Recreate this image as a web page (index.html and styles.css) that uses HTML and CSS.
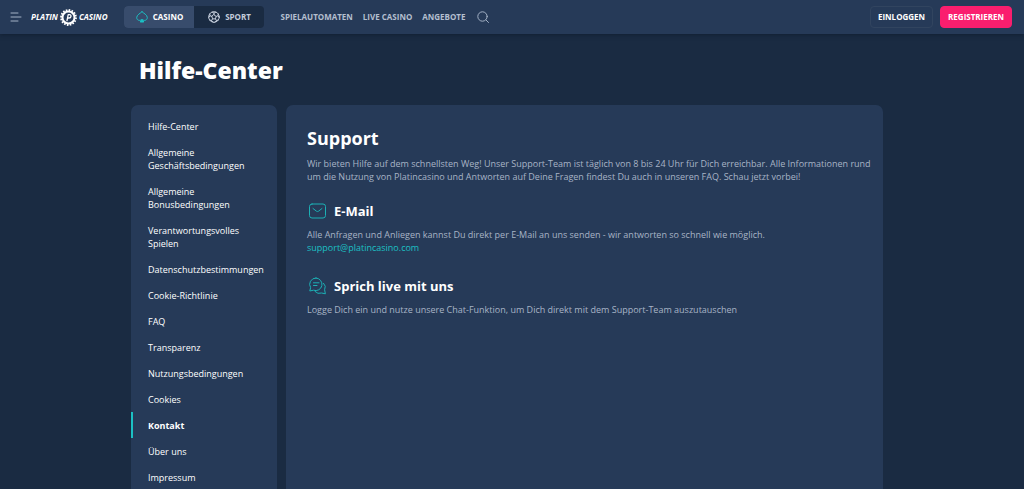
FILE: index.html
```html
<!DOCTYPE html>
<html lang="de">

<head>
    <meta charset="UTF-8">
    <meta name="viewport" content="width=device-width, initial-scale=1.0">
    <title>Hilfe-Center - Platin Casino</title>
    <link rel="stylesheet" href="styles.css">
</head>

<body>
    <header class="topbar">
        <button class="menu-btn" aria-label="Menu">
            <svg width="12" height="10" viewBox="0 0 12 10"><path d="M1 1h7M1 5h10M1 9h7" /></svg>
        </button>
        <a class="logo" href="#">
            <span>PLATIN</span>
            <svg class="chip" width="17" height="17" viewBox="0 0 17 17">
                <circle class="teeth" cx="8.5" cy="8.5" r="7.4" />
                <circle class="ring" cx="8.5" cy="8.5" r="6" />
                <path class="mark" d="M7 11.600L8.200 5.700h1.300c2.200 0 1.900 3.300-.5 3.300H7.600" />
            </svg>
            <span>CASINO</span>
        </a>
        <div class="switch">
            <a class="switch-item active" href="#">
                <svg width="12" height="12" viewBox="0 0 12 12">
                    <path d="M6 .7C4.500 2.300.7 3.800.7 6.600c0 2.700 2.900 3.500 4.700 2.100h1.200c1.800 1.400 4.700.6 4.700-2.100C11.300 3.800 7.500 2.300 6 .7z" />
                    <path class="stem" d="M5.400 9L4.200 11h3.600L6.600 9z" />
                </svg>
                CASINO
            </a>
            <a class="switch-item" href="#">
                <svg width="12" height="12" viewBox="0 0 12 12">
                    <circle cx="6" cy="6" r="5.300" />
                    <path d="M6 3.800l2.200 1.600-.8 2.500H4.600l-.8-2.500zM6 3.800V2.200M8.200 5.400l1.700-.6M7.400 7.900l1 1.500M4.600 7.900l-1 1.500M3.800 5.400l-1.700-.6M4.200 1.100L6 2.200l1.800-1.100M11.200 6.300L9.900 4.800l.4-1.900M6.800 11.200l1.600-1.800 1.900-.3M1.700 9.100l1.900.3 1.600 1.800M1.700 2.900l.4 1.900L.8 6.300" />
                </svg>
                SPORT
            </a>
        </div>
        <nav class="main-nav">
            <a href="#">SPIELAUTOMATEN</a>
            <a href="#">LIVE CASINO</a>
            <a href="#">ANGEBOTE</a>
        </nav>
        <button class="search-btn" aria-label="Suche">
            <svg width="12" height="12" viewBox="0 0 12 12"><circle cx="5.500" cy="5.500" r="4.700" /><path d="M9 9l2.500 2.500" /></svg>
        </button>
        <div class="account">
            <button class="btn">EINLOGGEN</button>
            <button class="btn btn-primary">REGISTRIEREN</button>
        </div>
    </header>

    <main class="page">
        <h1>Hilfe-Center</h1>
        <div class="columns">
            <ul class="sidebar">
                <li><a href="#">Hilfe-Center</a></li>
                <li><a href="#">Allgemeine Geschäftsbedingungen</a></li>
                <li><a href="#">Allgemeine Bonusbedingungen</a></li>
                <li><a href="#">Verantwortungsvolles Spielen</a></li>
                <li><a href="#">Datenschutzbestimmungen</a></li>
                <li><a href="#">Cookie-Richtlinie</a></li>
                <li><a href="#">FAQ</a></li>
                <li><a href="#">Transparenz</a></li>
                <li><a href="#">Nutzungsbedingungen</a></li>
                <li><a href="#">Cookies</a></li>
                <li><a class="current" href="#">Kontakt</a></li>
                <li><a href="#">Über uns</a></li>
                <li><a href="#">Impressum</a></li>
            </ul>
            <section class="content">
                <h2>Support</h2>
                <p class="intro">Wir bieten Hilfe auf dem schnellsten Weg! Unser Support-Team ist täglich von 8 bis 24 Uhr für Dich erreichbar. Alle Informationen rund um die Nutzung von Platincasino und Antworten auf Deine Fragen findest Du auch in unseren FAQ. Schau jetzt vorbei!</p>

                <div class="contact">
                    <h3>
                        <svg width="20" height="20" viewBox="0 0 20 20">
                            <rect x="2.500" y="3" width="16" height="14" rx="2.500" />
                            <path d="M6 7.500l3.500 2.700q1 .7 2 0L15 7.500" />
                        </svg>
                        E-Mail
                    </h3>
                    <p>Alle Anfragen und Anliegen kannst Du direkt per E-Mail an uns senden - wir antworten so schnell wie möglich.<br>
                        <a href="mailto:support@platincasino.com">support@platincasino.com</a></p>
                </div>

                <div class="contact">
                    <h3>
                        <svg width="20" height="20" viewBox="0 0 20 20">
                            <path d="M9 2a6.300 6.300 0 1 1-2.500 12.200L2.800 15l.8-3.400A6.300 6.300 0 0 1 9 2z" />
                            <path d="M6.500 6.800h5.500M6.500 9.500h3.500" />
                            <path d="M16.600 7.300a5.500 5.500 0 0 1 1 6.500l.8 4-3.800-.8a6 6 0 0 1-6.600-1.500" />
                        </svg>
                        Sprich live mit uns
                    </h3>
                    <p>Logge Dich ein und nutze unsere Chat-Funktion, um Dich direkt mit dem Support-Team auszutauschen</p>
                </div>
            </section>
        </div>
    </main>
</body>

</html>
```
FILE: styles.css
```css
* {
    margin: 0;
    padding: 0;
    box-sizing: border-box;
}

body {
    min-height: 100vh;
    display: flex;
    flex-direction: column;
    background: #1a2b42;
    color: #fff;
    font-family: "Open Sans", sans-serif;
    font-size: 9px;
    line-height: 13px;
}

a {
    color: inherit;
    text-decoration: none;
}

button {
    border: none;
    background: none;
    color: inherit;
    font: inherit;
    cursor: pointer;
}

svg {
    display: block;
    flex-shrink: 0;
    fill: none;
    stroke: currentColor;
    stroke-linecap: round;
    stroke-linejoin: round;
}

/* Top bar */
.topbar {
    display: flex;
    align-items: center;
    height: 34px;
    padding: 0 12px 0 10px;
    background: #263a58;
    box-shadow: 0 1px 4px rgba(10, 20, 36, 0.5);
    font-size: 8px;
    font-weight: 700;
    line-height: 12px;
    white-space: nowrap;
}

.menu-btn {
    color: #a3b1c5;
}

.logo {
    display: flex;
    align-items: center;
    gap: 2px;
    margin: 0 17px 0 9px;
    font-style: italic;
}

.chip .teeth {
    stroke: #fff;
    stroke-width: 2;
    stroke-dasharray: 1.600 1.300;
    stroke-linecap: butt;
}

.chip .ring {
    stroke: #fff;
    stroke-width: 2;
}

.chip .mark {
    stroke: #fff;
    stroke-width: 1.300;
}

.switch {
    display: flex;
    border-radius: 4px;
    overflow: hidden;
    background: #1a2b42;
}

.switch-item {
    display: flex;
    align-items: center;
    justify-content: center;
    gap: 5px;
    width: 70px;
    height: 22px;
    color: #c3ccda;
}

.switch-item.active {
    background: #384c6c;
    color: #fff;
}

.switch-item.active svg {
    color: #1cc0c4;
}

.switch-item .stem {
    fill: currentColor;
}

.main-nav {
    display: flex;
    gap: 10px;
    margin: 0 12px 0 16px;
    color: #b4bfcf;
}

.search-btn {
    color: #a3b1c5;
}

.account {
    display: flex;
    gap: 7px;
    margin-left: auto;
}

.btn {
    height: 22px;
    padding: 0 7px;
    border: 1px solid #31445f;
    border-radius: 4px;
}

.btn-primary {
    border-color: #fa1e6e;
    background: #fa1e6e;
}

/* Help center */
.page {
    flex: 1;
    display: flex;
    flex-direction: column;
    width: 100%;
    max-width: 762px;
    margin: 0 auto;
    padding-right: 10px;
}

h1 {
    padding: 20px 8px 19px;
    font-size: 23px;
    font-weight: 800;
    line-height: 32px;
}

.columns {
    flex: 1;
    display: flex;
    gap: 9px;
}

.sidebar,
.content {
    background: #263a58;
    border-radius: 7px 7px 0 0;
}

.sidebar {
    width: 146px;
    flex-shrink: 0;
    padding-top: 8px;
    list-style: none;
}

.sidebar a {
    display: block;
    padding: 7px 15px 6px;
    border-left: 2px solid transparent;
}

.sidebar .current {
    border-left-color: #1cc0c4;
    font-weight: 700;
}

.content {
    flex: 1;
    padding: 21px 8px 0 21px;
}

.content h2 {
    margin-bottom: 7px;
    font-size: 18px;
    line-height: 24px;
}

.content p {
    color: #a8b4c6;
}

.content .intro {
    margin-bottom: 18px;
}

.contact {
    margin-bottom: 22px;
}

.contact h3 {
    display: flex;
    align-items: center;
    gap: 7px;
    margin-bottom: 7px;
    font-size: 13px;
    line-height: 20px;
}

.contact h3 svg {
    color: #1cb0b5;
}

.contact p a {
    color: #1cc0c4;
}
```
